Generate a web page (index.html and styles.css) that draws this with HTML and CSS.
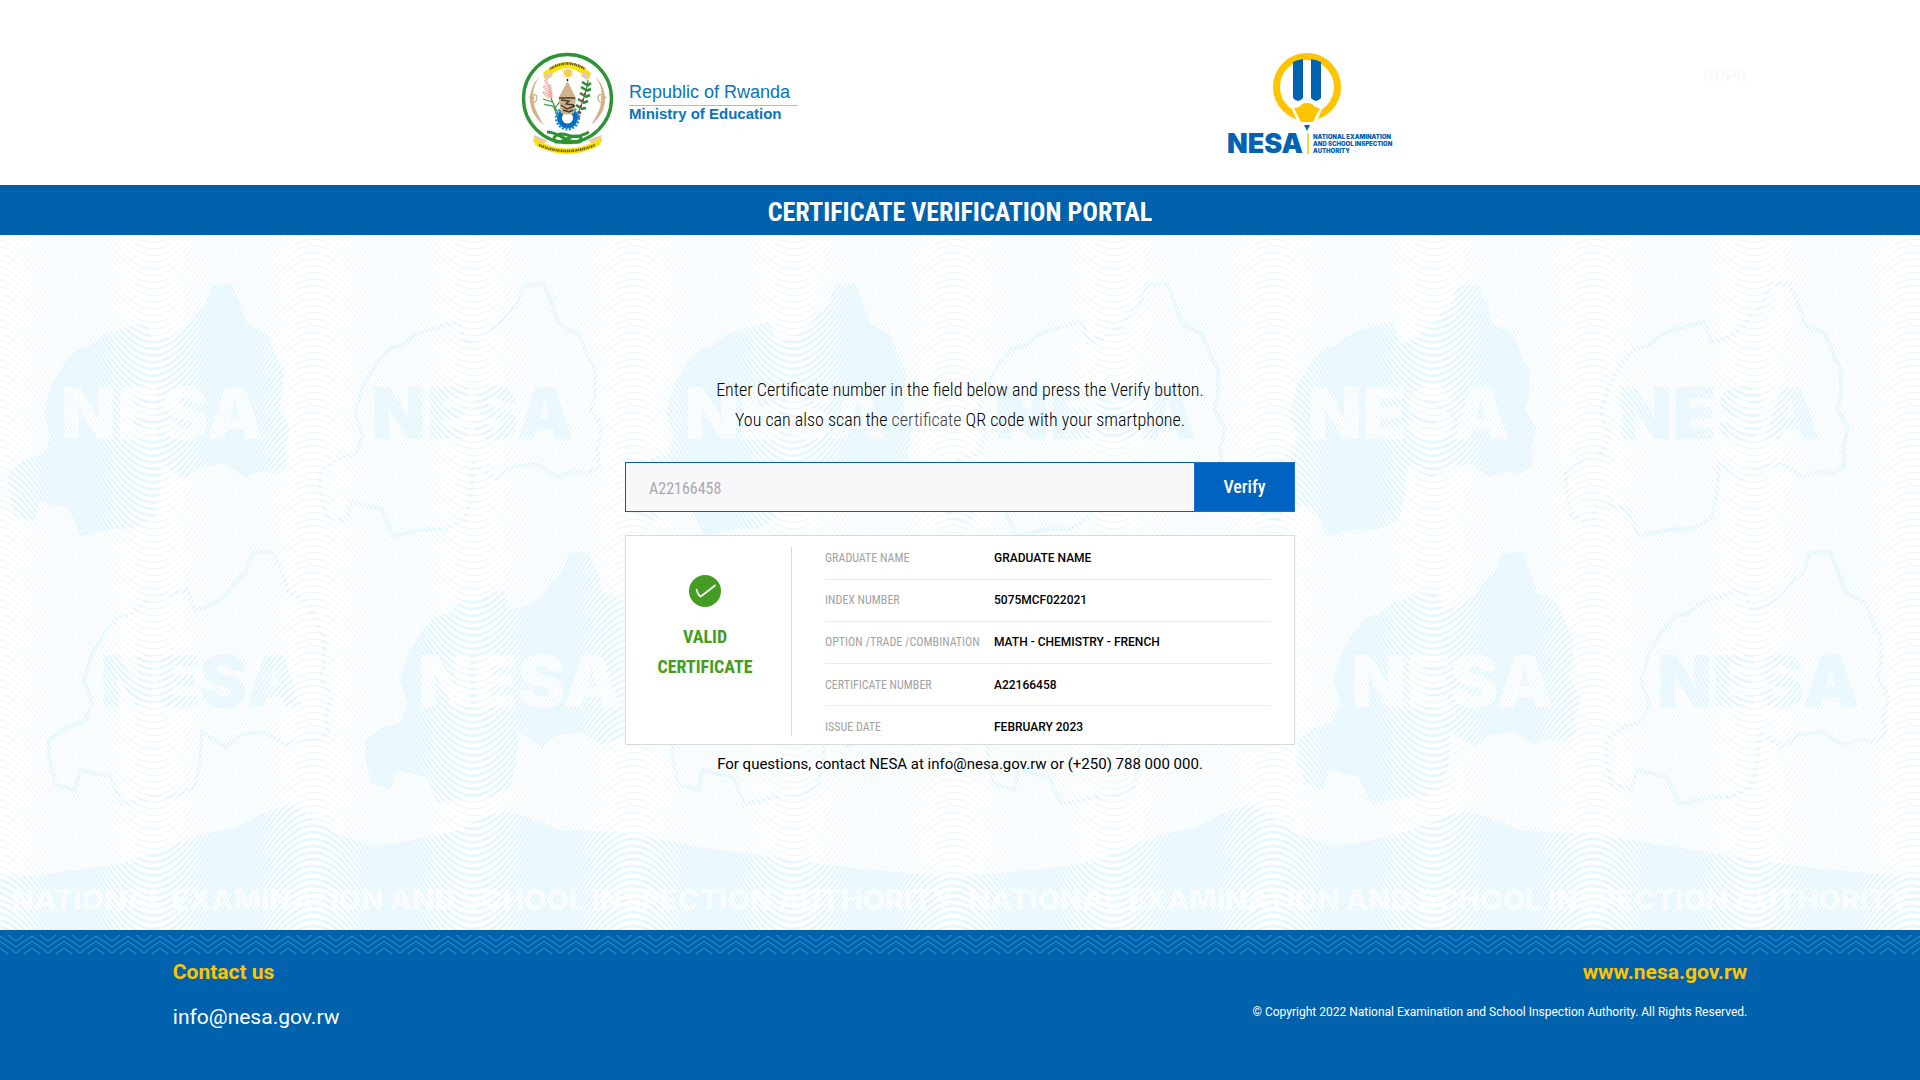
FILE: index.html
```html
<!DOCTYPE html>
<html lang="en">
<head>
<meta charset="utf-8">
<meta name="viewport" content="width=device-width, initial-scale=1">
<title>NESA Certificate Verification Portal</title>
<link rel="stylesheet" href="styles.css">
</head>
<body>
<header class="site-header">
  <div class="brands">
    <div class="ministry">
      <svg class="emblem" viewBox="0 0 94 102" aria-hidden="true">
        <circle cx="47.500" cy="46.500" r="44" fill="#fff" stroke="#2e9334" stroke-width="3.400"/>
        <path d="M23 21Q47 -1 71 21L69 28 64 24Q47 8 30 24L25 28Z" fill="#fbe106"/>
        <path d="M23 24l8-5 2 5-6 4zM71 24l-8-5-2 5 6 4z" fill="#e3cda8"/>
        <path d="M30 17Q47 6 65 17" fill="none" stroke="#5d5210" stroke-width="2.500" stroke-dasharray="1 .8 1.500 .6"/>
        <circle cx="48" cy="21" r="4" fill="#f8cc51"/>
        <circle cx="48" cy="21" r="5" fill="none" stroke="#fbe3a0" stroke-width="2" stroke-dasharray="1 1"/>
        <path d="M20 24C6 38 6 60 24 73C16 60 13 53 14 46C12 39 15 31 20 24Z" fill="#d2b48c"/>
        <path d="M75 24C89 38 89 60 71 73C79 60 82 53 81 46C83 39 80 31 75 24Z" fill="#d2b48c"/>
        <path d="M9 46c4-5 8-4 8 0s-4 6-6 4M86 46c-4-5-8-4-8 0s4 6 6 4" fill="none" stroke="#d2b48c" stroke-width="1.300"/>
        <path d="M25 28c4 6 7 13 6 18M24 34c3 4 6 8 6 12M23 40l7 6M30 33l1 12" fill="none" stroke="#f2aaa0" stroke-width="3" stroke-dasharray="1.500 .8"/>
        <path d="M31 46c2 6 6 12 8 18M23 47l9 3M24 52c4 2 8 1 10 3l3 9M40 49l-4 6" fill="none" stroke="#3e9441" stroke-width="1.200"/>
        <path d="M68 28c-1 10-5 22-11 36" fill="none" stroke="#2e8a35" stroke-width="1.200"/>
        <path d="M67 33l-5-3M67 34l4-3M66 38l-5-3M66 39l5-2M65 44l-5-3M65 45l5-2M63 50l-5-3M63 51l5-2M61 56l-5-3M61 57l5-1" stroke="#2e8a35" stroke-width="2.600"/>
        <path d="M64 42h2M62 48h2M60 54h2M58 60l3 1M57 64l3 1" stroke="#d4215a" stroke-width="2.500"/>
        <circle cx="47.500" cy="66" r="8" fill="none" stroke="#0c6cb5" stroke-width="5"/>
        <circle cx="47.500" cy="66" r="11" fill="none" stroke="#1491dc" stroke-width="3" stroke-dasharray="2 1.450"/>
        <path d="M47.500 29L56 46 54 61Q47.500 64 41 61L38.500 46Z" fill="#d0b28a"/>
        <path d="M47.500 29v-2" stroke="#222" stroke-width="1.500"/>
        <path d="M39 46h16M41 48l8 1-3 3 8 1M41 53l6 4 8-3M43 58l6 2 4-2" fill="none" stroke="#45372a" stroke-width="1.400"/>
        <path d="M14 83l13 5-5 6-9-4zM81 83l-13 5 5 6 9-4z" fill="#e3cda8"/>
        <path d="M14 86Q47 107 81 86L80 93Q47 111 15 93Z" fill="#fbe106"/>
        <path d="M19 93Q47 105 75 93" fill="none" stroke="#6b5d10" stroke-width="2.500" stroke-dasharray="1.500 .7 1 .6"/>
        <path d="M27 80C40 80 47 92 59 90C64 88 61 84 56 84C48 84 44 91 36 90C31 88 35 82 41 82C51 82 52 89 69 80" fill="none" stroke="#2e9334" stroke-width="3"/>
      </svg>
      <p class="ministry-name"><span class="country">Republic of Rwanda</span><strong>Ministry of Education</strong></p>
      <span class="ghost ghost-items" aria-hidden="true">Items</span>
    </div>
    <svg class="nesa-logo" viewBox="2 0 172 108" role="img" aria-label="NESA, National Examination and School Inspection Authority">
      <circle cx="81" cy="35" r="30.500" fill="#fff" stroke="#ffc400" stroke-width="7"/>
      <path d="M64 53L98 53 84 84 78 84Z" fill="#fff"/>
      <path d="M67 10Q71 8 77 7V46Q72 52 67 46ZM85 7Q91 8 95 10V46Q90 52 85 46Z" fill="#0062b1"/>
      <path d="M68 56Q74 56 76 52Q81 50 86 52Q89 56 94 56L87 70H75Z" fill="#ffc400"/>
      <path d="M78 73h6l-3 6Z" fill="#0062b1"/>
      <path d="M82 81v21" stroke="#ffc400" stroke-width="1.500"/>
      <text class="logo-word" x="1" y="101">NESA</text>
      <text class="logo-small" x="87" y="87">NATIONAL EXAMINATION</text>
      <text class="logo-small" x="87" y="94">AND SCHOOL INSPECTION</text>
      <text class="logo-small" x="87" y="101">AUTHORITY</text>
    </svg>
  </div>
  <span class="ghost ghost-rppa" aria-hidden="true">RPPA</span>
</header>

<div class="title-bar"><h1>CERTIFICATE VERIFICATION PORTAL</h1></div>

<main class="hero">
  <svg class="guilloche" viewBox="0 0 1920 695" preserveAspectRatio="xMidYMin slice" aria-hidden="true">
    <defs>
      <path id="wave" d="M-160 190C-102 190 -58 0 0 0S102 190 160 190S262 0 320 0S422 190 480 190"/>
      <g id="three"><use href="#wave"/><use href="#wave" y="6.667"/><use href="#wave" y="13.333"/></g>
      <g id="waves" fill="none" stroke="#e6f6fe">
        <use href="#three" y="-220"/><use href="#three" y="-200"/><use href="#three" y="-180"/><use href="#three" y="-160"/><use href="#three" y="-140"/><use href="#three" y="-120"/><use href="#three" y="-100"/><use href="#three" y="-80"/><use href="#three" y="-60"/><use href="#three" y="-40"/><use href="#three" y="-20"/><use href="#three"/><use href="#three" y="20"/>
      </g>
      <pattern id="thin" x="-7" y="4" width="320" height="20" patternUnits="userSpaceOnUse"><use href="#waves" stroke-width="1"/></pattern>
      <pattern id="thick" x="-7" y="4" width="320" height="20" patternUnits="userSpaceOnUse"><use href="#waves" stroke-width="2.600"/></pattern>
      <path id="land" d="M0 0L20-1 29 21 35 39 55 49 65 74 71 84 71 111 67 124 73 134 78 144 73 164 75 181 61 189 49 186 33 192 12 179-12 182-27 194-51 179-53 211-59 234-78 244-98 244-131 251-143 224-173 217-178 237-198 231-204 204-204 187-186 174-169 169-161 151-169 127-161 101-147 77-135 64-122 61-108 49-86 42-65 37-59 57-41 52-27 42-18 29-8 21Z"/>
      <g id="solid"><use href="#land" fill="#fff"/><text class="mark" x="-151" y="154" fill="#000">NESA</text></g>
      <g id="outline"><use href="#land" fill="none" stroke="#fff" stroke-width="4"/><text class="mark" x="-153" y="154" fill="#fff">NESA</text></g>
      <mask id="marks" maskUnits="userSpaceOnUse" x="0" y="0" width="1920" height="695">
        <use href="#solid" x="212" y="50"/><use href="#outline" x="524" y="50"/>
        <use href="#solid" x="835" y="50"/><use href="#outline" x="1147" y="50"/>
        <use href="#solid" x="1458" y="50"/><use href="#outline" x="1770" y="50"/>
        <use href="#outline" x="253" y="318"/><use href="#solid" x="569" y="318"/>
        <use href="#outline" x="876" y="318"/><use href="#outline" x="1192" y="318"/>
        <use href="#solid" x="1502" y="318"/><use href="#outline" x="1810" y="318"/>
        <path fill="#fff" d="M0 642L40 640 90 633 137 625 155 617 200 600 235 593 270 575 293 568 308 580 335 598 375 612 425 603 455 596 478 585 505 575 530 583 560 595 600 596 640 600 700 612 760 620 860 634 960 642 1050 633 1097 625 1160 600 1195 593 1230 575 1253 568 1268 580 1295 598 1335 612 1385 603 1438 585 1465 575 1490 583 1520 595 1600 600 1700 616 1820 634 1920 642V695H0Z"/>
        <text class="strap" x="12" y="675" fill="#000">NATIONAL EXAMINATION AND SCHOOL INSPECTION AUTHORITY</text>
        <text class="strap" x="968" y="675" fill="#000">NATIONAL EXAMINATION AND SCHOOL INSPECTION AUTHORITY</text>
      </mask>
    </defs>
    <rect width="1920" height="695" fill="url(#thin)"/>
    <rect width="1920" height="695" fill="url(#thick)" mask="url(#marks)"/>
  </svg>

  <div class="portal">
    <p class="intro">Enter Certificate number in the field below and press the Verify button.<br>You can also scan the <span class="soft">certificate</span> QR code with your smartphone.</p>
    <form class="verify">
      <input class="verify-input" type="text" placeholder="A22166458" aria-label="Certificate number">
      <button class="verify-button" type="submit">Verify</button>
    </form>
    <section class="result">
      <div class="status">
        <svg class="tick" viewBox="0 0 32 32" aria-hidden="true"><circle cx="16" cy="16" r="16" fill="#449c22"/><path d="M7.500 14.500Q9 20 11.500 21.500Q14 20 26 10.500" fill="none" stroke="#fff" stroke-width="1.700" stroke-linecap="round"/></svg>
        <strong>VALID<br>CERTIFICATE</strong>
      </div>
      <table class="details">
        <tr><th scope="row">GRADUATE NAME</th><td>GRADUATE NAME</td></tr>
        <tr><th scope="row">INDEX NUMBER</th><td>5075MCF022021</td></tr>
        <tr><th scope="row">OPTION /TRADE /COMBINATION</th><td>MATH - CHEMISTRY - FRENCH</td></tr>
        <tr><th scope="row">CERTIFICATE NUMBER</th><td>A22166458</td></tr>
        <tr><th scope="row">ISSUE DATE</th><td>FEBRUARY 2023</td></tr>
      </table>
    </section>
    <p class="questions">For questions, contact NESA at info@nesa.gov.rw or (+250) 788 000 000.</p>
  </div>
</main>

<footer class="site-footer">
  <svg class="zigzag" aria-hidden="true">
    <defs><pattern id="zig" width="32" height="20" patternUnits="userSpaceOnUse">
      <path d="M8 0L16 6 24 0M0 1L16 12 32 1M0 6L16 18 32 6M-8 19L0 13 8 19M24 19L32 13 40 19" fill="none" stroke="#3493d3" stroke-width="1"/>
    </pattern></defs>
    <rect width="100%" height="20" fill="url(#zig)"/>
  </svg>
  <div class="footer-row">
    <div class="contact">
      <h2>Contact us</h2>
      <a href="mailto:info@nesa.gov.rw">info@nesa.gov.rw</a>
    </div>
    <div class="legal">
      <a class="site-link" href="#">www.nesa.gov.rw</a>
      <p>© Copyright 2022 National Examination and School Inspection Authority. All Rights Reserved.</p>
    </div>
  </div>
</footer>
</body>
</html>
```

FILE: styles.css
```css
* { box-sizing: border-box; }

body {
  margin: 0;
  min-height: 100vh;
  display: flex;
  flex-direction: column;
  font-family: Roboto, "Liberation Sans", sans-serif;
  color: #000;
  background: #fff;
}

h1, h2, p { margin: 0; }
a { color: inherit; text-decoration: none; }

/* Header */
.site-header { position: relative; padding: 52px 20px 25px; }
.brands {
  max-width: 880px;
  margin: 0 auto;
  display: flex;
  align-items: flex-start;
  justify-content: space-between;
}
.ministry { position: relative; display: flex; align-items: flex-start; gap: 15px; }
.emblem { width: 94px; height: 102px; }
.ministry-name {
  width: 169px;
  padding-top: 27px;
  font-family: "Liberation Sans", Arial, sans-serif;
  color: #0b74ba;
}
.ministry-name .country {
  display: block;
  font-size: 18px;
  line-height: 26px;
  border-bottom: 1px solid #bbb;
}
.ministry-name strong { display: block; font-size: 15px; line-height: 16px; }
.nesa-logo { width: 172px; height: 108px; }
.logo-word, .logo-small { font-family: Inter, sans-serif; font-weight: 900; fill: #0062b1; }
.logo-word { font-size: 27px; }
.logo-small { font-size: 6px; }
.ghost { position: absolute; color: #f8f8f8; font-size: 18px; line-height: 24px; }
.ghost-items { left: 61px; top: 23px; z-index: -1; }
.ghost-rppa { right: 9%; top: 64px; }

/* Title */
.title-bar { background: #0062ad; color: #fff; text-align: center; }
.title-bar h1 {
  font-family: "Roboto Condensed", Roboto, sans-serif;
  font-size: 26px;
  font-weight: 700;
  line-height: 46px;
  padding-top: 4px;
}

/* Main */
.hero { position: relative; flex: 1; padding: 140px 20px; overflow: hidden; }
.guilloche { position: absolute; left: 0; top: 0; width: 100%; height: 100%; }
.mark, .strap { font-family: Inter, sans-serif; font-weight: 900; }
.mark { font-size: 72px; }
.strap { font-size: 29px; font-weight: 800; }

.portal { position: relative; max-width: 670px; margin: 0 auto; }
.intro {
  font-family: "Roboto Condensed", Roboto, sans-serif;
  font-size: 18px;
  font-weight: 300;
  line-height: 30px;
  text-align: center;
  margin-bottom: 27px;
}
.soft { color: #444; }

.verify { display: flex; margin-bottom: 23px; }
.verify-input {
  flex: 1;
  min-width: 0;
  height: 50px;
  padding: 2px 23px 0;
  border: 1px solid #0062ad;
  border-right: 0;
  background: #f8f8fb;
  font-family: "Roboto Condensed", Roboto, sans-serif;
  font-size: 16px;
  color: #000;
}
.verify-input::placeholder { color: #a9a9a9; opacity: 1; }
.verify-button {
  width: 101px;
  height: 50px;
  padding: 0 0 2px;
  border: 1px solid #1a70c8;
  background: #0062c1;
  color: #fff;
  font-family: "Roboto Condensed", Roboto, sans-serif;
  font-size: 18px;
  font-weight: 500;
}

.result {
  display: flex;
  min-height: 210px;
  padding: 11px 23px 8px 0;
  border: 1px solid #d9d9d9;
  background: #fff;
}
.status {
  width: 166px;
  margin-right: 33px;
  padding: 28px 7px 0 0;
  border-right: 1px solid #d9d9d9;
  text-align: center;
  color: #449c22;
}
.tick { display: block; width: 32px; height: 32px; margin: 0 auto 15px; }
.status strong {
  display: block;
  font-family: "Roboto Condensed", Roboto, sans-serif;
  font-size: 18px;
  line-height: 30px;
}
.details { flex: 1; margin: -10px 0 -12px; border-collapse: collapse; font-size: 12px; }
.details th, .details td { padding: 0; height: 42px; text-align: left; }
.details th {
  width: 169px;
  font-family: "Roboto Condensed", Roboto, sans-serif;
  font-weight: 400;
  color: #a3a3a3;
  white-space: nowrap;
}
.details td { font-weight: 500; }
.details tr + tr { border-top: 1px solid #ececec; }
.questions { padding-top: 7px; font-size: 15px; line-height: 24px; text-align: center; }

/* Footer */
.site-footer { min-height: 150px; background: #0062ad; color: #fff; }
.zigzag { display: block; width: 100%; height: 20px; margin-top: 5px; }
.footer-row { display: flex; justify-content: space-between; padding: 5px 9% 40px; }
.contact h2, .site-link { font-size: 21px; font-weight: 700; line-height: 24px; color: #ffc400; }
.contact a { display: block; margin-top: 21px; font-size: 21px; line-height: 24px; }
.legal { text-align: right; }
.legal p { margin-top: 19px; font-size: 12px; line-height: 18px; }
```
